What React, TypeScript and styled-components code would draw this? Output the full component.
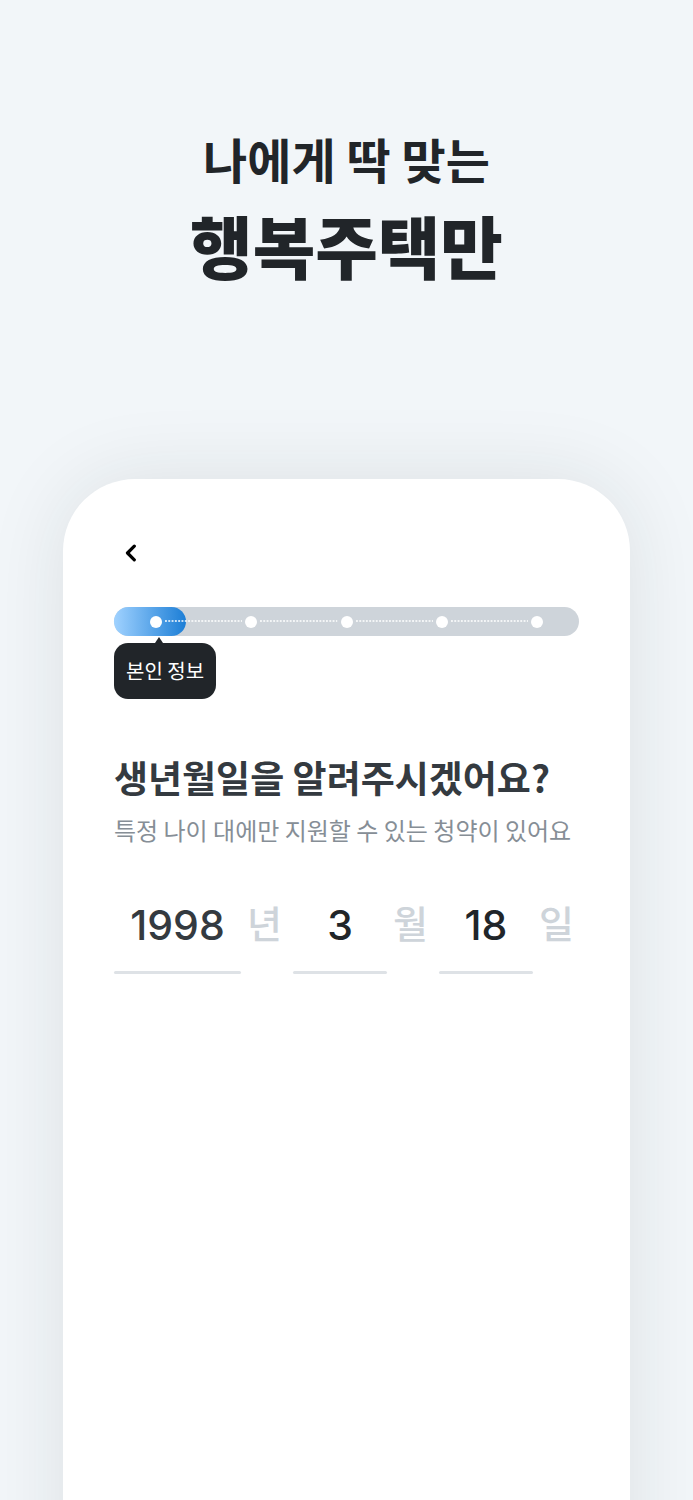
import React, { useState } from "react";
import styled, { createGlobalStyle } from "styled-components";

const GlobalStyle = createGlobalStyle`
  * { box-sizing: border-box; }
  body {
    margin: 0;
    background: #f2f6f9;
    font-family: "Noto Sans CJK KR", sans-serif;
    color: #212529;
  }
`;

const Page = styled.div`
  min-height: 100vh;
  padding: 118px 63px 0;
  display: flex;
  flex-direction: column;
  overflow: hidden;
`;

const Headline = styled.h1`
  margin: 0 0 187px;
  display: flex;
  flex-direction: column;
  align-items: center;
  text-align: center;
`;

const Lead = styled.span`
  font-size: 48px;
  font-weight: 700;
  line-height: 80px;
`;

const Strong = styled.span`
  font-size: 68px;
  font-weight: 900;
  line-height: 94px;
`;

/* The sheet runs on past the bottom edge, so its shadow stays even there. */
const Card = styled.main`
  flex: 1;
  margin-bottom: -100px;
  padding: 60px 51px 140px;
  border-radius: 72px 72px 0 0;
  background: #fff;
  box-shadow: 0 0 80px rgba(33, 37, 35, 0.1);
`;

const BackButton = styled.button`
  display: flex;
  align-items: center;
  justify-content: center;
  width: 34px;
  height: 28px;
  padding: 0;
  border: 0;
  background: none;
  color: #000;
  cursor: pointer;
`;

const Progress = styled.div`
  position: relative;
  margin-top: 40px;
  height: 29px;
  border-radius: 15px;
  background: #ced4da;
`;

const ProgressFill = styled.div`
  position: absolute;
  inset: 0 auto 0 0;
  width: 72px;
  border-radius: 15px;
  background: linear-gradient(90deg, #a0d2ff, #1c7ed6);
`;

const Steps = styled.ol`
  position: relative;
  display: flex;
  align-items: center;
  gap: 3px;
  height: 100%;
  margin: 0;
  padding: 0 36px;
  list-style: none;
`;

const Step = styled.li<{ $last?: boolean }>`
  display: flex;
  align-items: center;
  gap: 3px;
  flex: ${(p) => (p.$last ? "none" : "1 1 0")};
  min-width: 0;
`;

const Dot = styled.span`
  flex: none;
  width: 12px;
  height: 12px;
  border-radius: 50%;
  background: #fff;
`;

const Dotted = styled.svg`
  flex: 1 1 0;
  width: 0;
  min-width: 0;
  height: 3px;
`;

const Tooltip = styled.div`
  position: relative;
  width: fit-content;
  margin-top: 7px;
  padding: 0 12px;
  border-radius: 14px;
  background: #212529;
  color: #fff;
  font-size: 20px;
  line-height: 56px;
`;

const TooltipArrow = styled.svg`
  position: absolute;
  left: 40px;
  bottom: 100%;
  display: block;
`;

const Question = styled.h2`
  margin: 50px 0 0;
  color: #343a40;
  font-size: 37px;
  font-weight: 700;
  line-height: 56px;
  white-space: nowrap;
`;

const Hint = styled.p`
  margin: 7px 0 0;
  color: #868e96;
  font-size: 24px;
  line-height: 36px;
  white-space: nowrap;
`;

const DateRow = styled.form`
  display: flex;
  margin-top: 44px;
`;

const Field = styled.label<{ $grow: number }>`
  display: flex;
  flex: ${(p) => p.$grow} 1 0;
  min-width: 0;
`;

const Box = styled.span`
  flex: 1;
  min-width: 0;
  &::after {
    content: "";
    display: block;
    height: 3px;
    border-radius: 2px;
    background: #dee2e6;
  }
`;

const DateInput = styled.input<{ $soft?: boolean }>`
  display: block;
  width: 100%;
  height: 79px;
  padding: 0 0 14px;
  border: 0;
  outline: 0;
  background: none;
  color: ${(p) => (p.$soft ? "#343a40" : "#212529")};
  font-family: Inter, sans-serif;
  font-size: 41px;
  font-weight: 500;
  text-align: center;
`;

const Unit = styled.span<{ $last?: boolean }>`
  flex: none;
  width: ${(p) => (p.$last ? 46 : 52)}px;
  padding-left: 6px;
  color: #ced4da;
  font-size: 38px;
  font-weight: 500;
  line-height: 60px;
`;

const fields = [
  { name: "year", unit: "년", value: "1998", grow: 179, length: 4 },
  { name: "month", unit: "월", value: "3", grow: 146, length: 2 },
  { name: "day", unit: "일", value: "18", grow: 140, length: 2 },
];

export default function App() {
  const [values, setValues] = useState(fields.map((f) => f.value));

  return (
    <>
      <GlobalStyle />
      <Page>
        <Headline>
          <Lead>나에게 딱 맞는</Lead>
          <Strong>행복주택만</Strong>
        </Headline>
        <Card>
          <BackButton type="button" aria-label="뒤로">
            <svg width="12" height="18" viewBox="0 0 12 18" fill="none">
              <path
                d="M9.3 2.2 2.5 9l6.8 6.8"
                stroke="currentColor"
                strokeWidth="3.2"
                strokeLinecap="round"
                strokeLinejoin="round"
              />
            </svg>
          </BackButton>
          <Progress>
            <ProgressFill />
            <Steps>
              {[0, 1, 2, 3, 4].map((i) => (
                <Step key={i} $last={i === 4}>
                  <Dot />
                  {i < 4 && (
                    <Dotted>
                      <line
                        x1="0"
                        y1="1"
                        x2="100%"
                        y2="1"
                        stroke="#fff"
                        strokeWidth="1.7"
                        strokeDasharray="1.9 1.4"
                      />
                    </Dotted>
                  )}
                </Step>
              ))}
            </Steps>
          </Progress>
          <Tooltip>
            본인 정보
            <TooltipArrow width="10" height="6" viewBox="0 0 10 6">
              <path d="M5 0 9 6H1Z" fill="#212529" />
            </TooltipArrow>
          </Tooltip>
          <Question>생년월일을 알려주시겠어요?</Question>
          <Hint>특정 나이 대에만 지원할 수 있는 청약이 있어요</Hint>
          <DateRow>
            {fields.map((f, i) => (
              <Field key={f.name} $grow={f.grow}>
                <Box>
                  <DateInput
                    name={f.name}
                    inputMode="numeric"
                    maxLength={f.length}
                    value={values[i]}
                    $soft={i === 0}
                    onChange={(e) =>
                      setValues(values.map((v, n) => (n === i ? e.target.value : v)))
                    }
                  />
                </Box>
                <Unit $last={i === 2}>{f.unit}</Unit>
              </Field>
            ))}
          </DateRow>
        </Card>
      </Page>
    </>
  );
}
